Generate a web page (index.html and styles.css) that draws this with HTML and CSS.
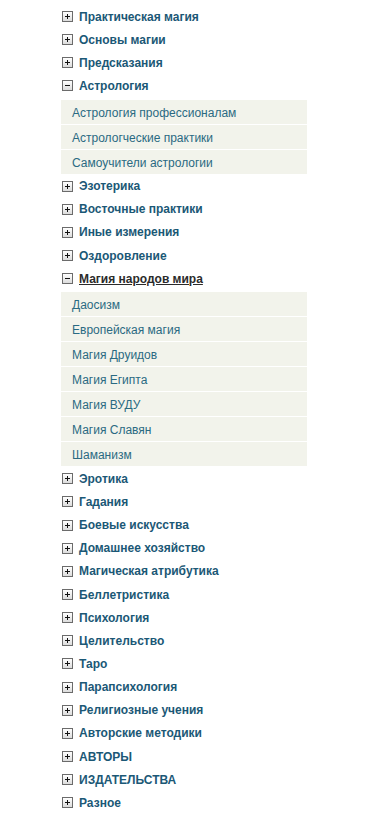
FILE: index.html
```html
<!DOCTYPE html>
<html lang="ru">
<head>
    <meta charset="UTF-8">
    <meta name="viewport" content="width=device-width, initial-scale=1.0">
    <title>Каталог</title>
    <link rel="stylesheet" href="styles.css">
</head>
<body>
    <ul class="menu">
        <li class="item"><span class="toggle plus"></span><a href="#">Практическая магия</a></li>
        <li class="item"><span class="toggle plus"></span><a href="#">Основы магии</a></li>
        <li class="item"><span class="toggle plus"></span><a href="#">Предсказания</a></li>
        <li class="item"><span class="toggle minus"></span><a href="#">Астрология</a></li>
        <li>
            <ul class="submenu">
                <li><a href="#">Астрология профессионалам</a></li>
                <li><a href="#">Астрологческие практики</a></li>
                <li><a href="#">Самоучители астрологии</a></li>
            </ul>
        </li>
        <li class="item"><span class="toggle plus"></span><a href="#">Эзотерика</a></li>
        <li class="item"><span class="toggle plus"></span><a href="#">Восточные практики</a></li>
        <li class="item"><span class="toggle plus"></span><a href="#">Иные измерения</a></li>
        <li class="item"><span class="toggle plus"></span><a href="#">Оздоровление</a></li>
        <li class="item active"><span class="toggle minus"></span><a href="#">Магия народов мира</a></li>
        <li>
            <ul class="submenu">
                <li><a href="#">Даосизм</a></li>
                <li><a href="#">Европейская магия</a></li>
                <li><a href="#">Магия Друидов</a></li>
                <li><a href="#">Магия Египта</a></li>
                <li><a href="#">Магия ВУДУ</a></li>
                <li><a href="#">Магия Славян</a></li>
                <li><a href="#">Шаманизм</a></li>
            </ul>
        </li>
        <li class="item"><span class="toggle plus"></span><a href="#">Эротика</a></li>
        <li class="item"><span class="toggle plus"></span><a href="#">Гадания</a></li>
        <li class="item"><span class="toggle plus"></span><a href="#">Боевые искусства</a></li>
        <li class="item"><span class="toggle plus"></span><a href="#">Домашнее хозяйство</a></li>
        <li class="item"><span class="toggle plus"></span><a href="#">Магическая атрибутика</a></li>
        <li class="item"><span class="toggle plus"></span><a href="#">Беллетристика</a></li>
        <li class="item"><span class="toggle plus"></span><a href="#">Психология</a></li>
        <li class="item"><span class="toggle plus"></span><a href="#">Целительство</a></li>
        <li class="item"><span class="toggle plus"></span><a href="#">Таро</a></li>
        <li class="item"><span class="toggle plus"></span><a href="#">Парапсихология</a></li>
        <li class="item"><span class="toggle plus"></span><a href="#">Религиозные учения</a></li>
        <li class="item"><span class="toggle plus"></span><a href="#">Авторские методики</a></li>
        <li class="item"><span class="toggle plus"></span><a href="#">АВТОРЫ</a></li>
        <li class="item"><span class="toggle plus"></span><a href="#">ИЗДАТЕЛЬСТВА</a></li>
        <li class="item"><span class="toggle plus"></span><a href="#">Разное</a></li>
    </ul>
</body>
</html>
```

FILE: styles.css
```css
body {
    margin: 0;
    background: #ffffff;
    font-family: "Liberation Sans", Arial, sans-serif;
}
ul {
    list-style: none;
    margin: 0;
    padding: 0;
}
.menu {
    width: 246px;
    padding: 5px 0 0 61px;
}
.item {
    display: flex;
    align-items: center;
    height: 23.15px;
    padding-left: 1px;
}
.item a {
    color: #1b5876;
    font-size: 12px;
    font-weight: bold;
    text-decoration: none;
}
.item.active a {
    color: #2b2b2b;
    text-decoration: underline;
}
.toggle {
    position: relative;
    width: 9px;
    height: 9px;
    margin-right: 6px;
    border: 1px solid #6b6b6b;
    background: linear-gradient(#ffffff, #dcdcdc);
    flex-shrink: 0;
}
.toggle::before,
.toggle::after {
    content: "";
    position: absolute;
    background: #111;
}
.toggle::before {
    left: 2px;
    top: 4px;
    width: 5px;
    height: 1px;
}
.plus::after {
    left: 4px;
    top: 2px;
    width: 1px;
    height: 5px;
}
.submenu {
    margin: 2px 0 1px;
}
.submenu li {
    height: 24px;
    line-height: 24px;
    margin-bottom: 1px;
    padding-left: 11px;
    background: #f2f3eb;
}
.submenu a {
    color: #2a6a82;
    font-size: 12px;
    text-decoration: none;
}
```
